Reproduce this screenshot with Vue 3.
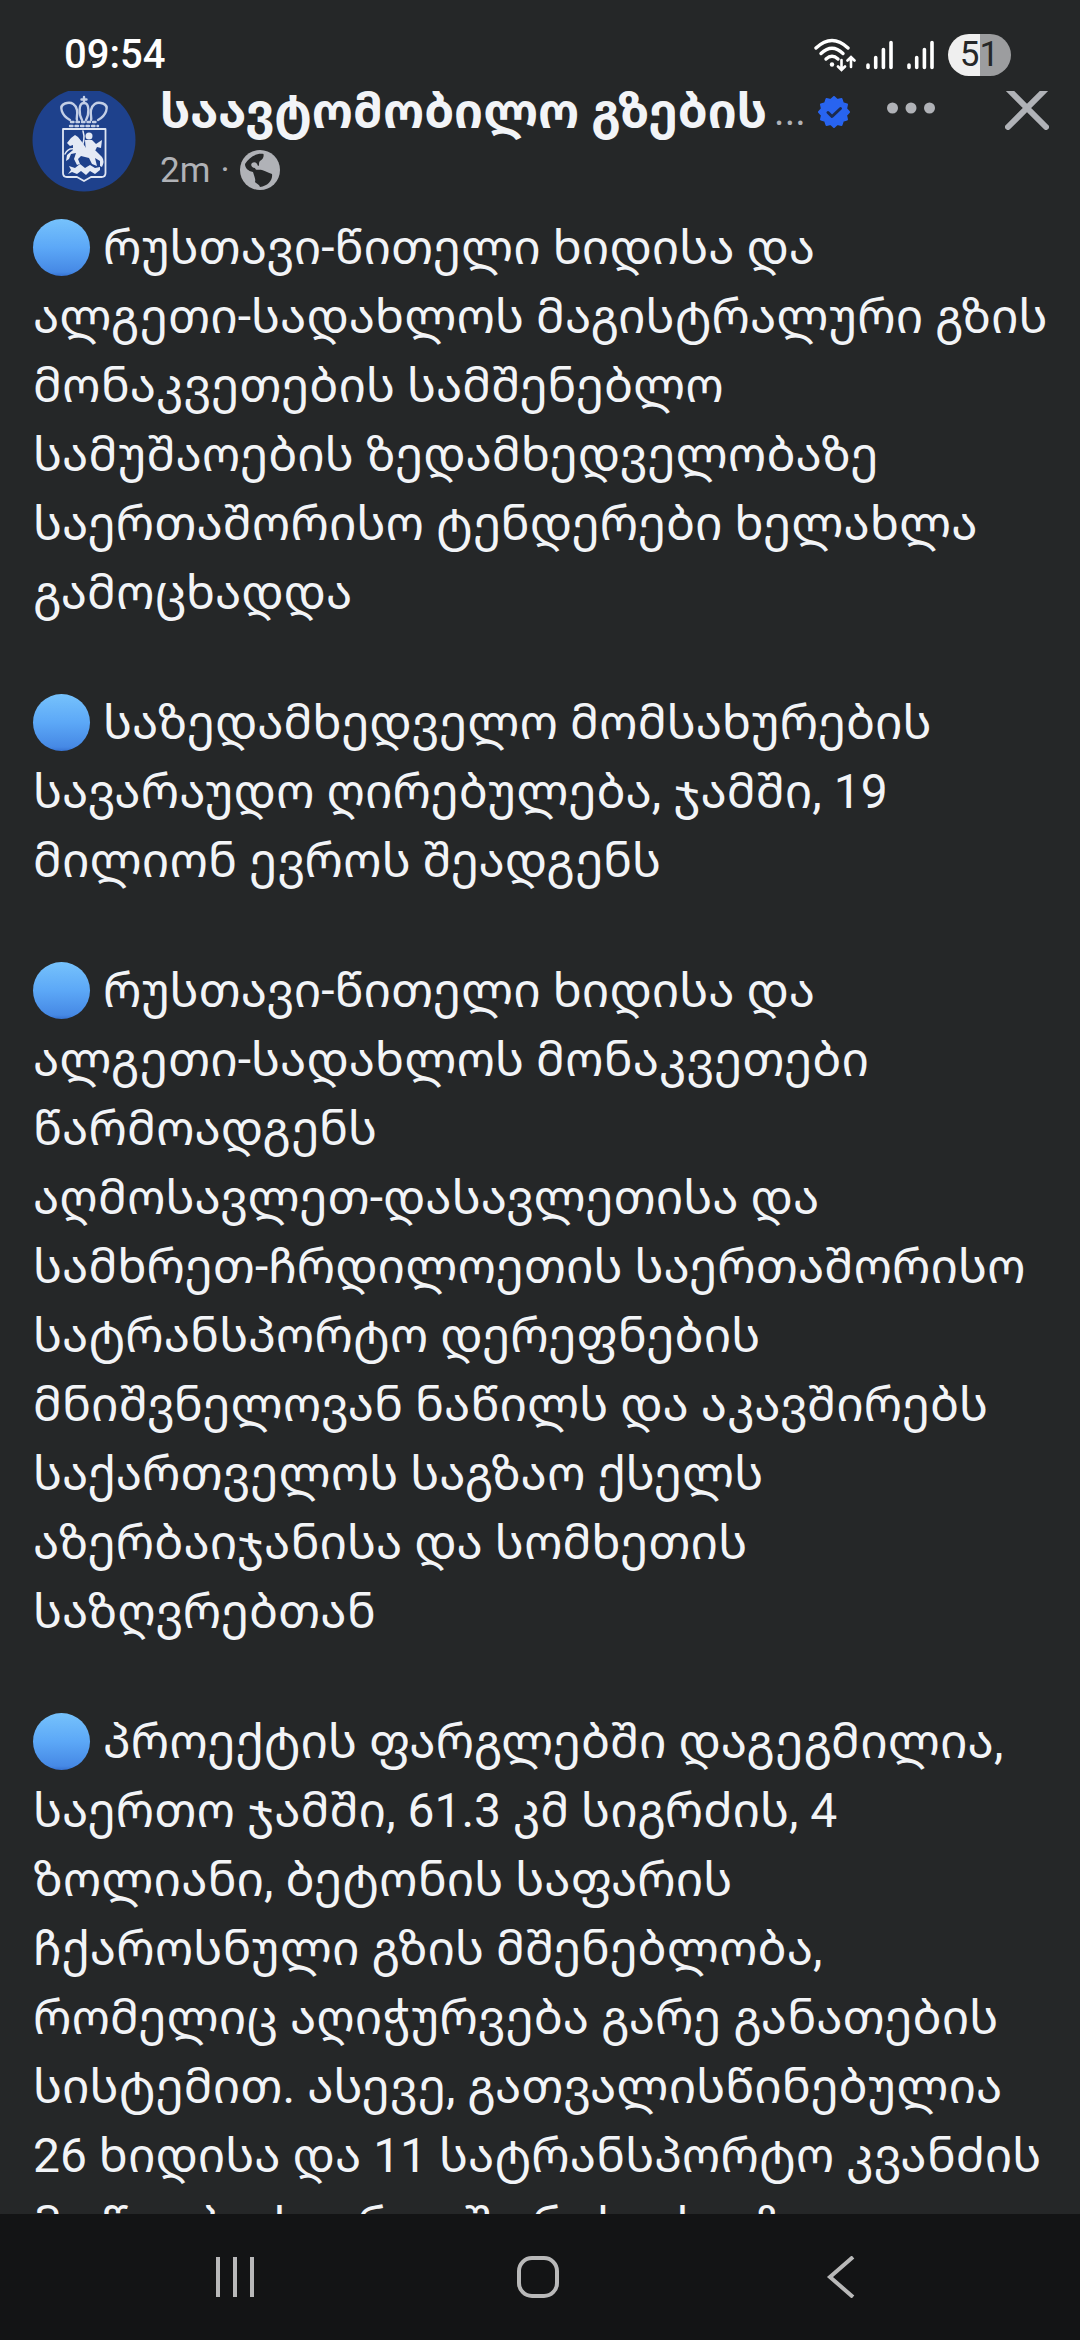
<template>
  <div class="screen">
    <div class="status-bar">
      <span class="clock">09:54</span>
      <div class="status-icons">
        <svg class="wifi" viewBox="0 0 42 34" fill="none" stroke="#fff" stroke-width="3.4" stroke-linecap="round">
          <path d="M2 10Q18 -5 34 10" />
          <path d="M7 15.500Q18 5 29 15.500" />
          <path d="M12 21Q18 15.500 24 21" />
          <circle cx="18" cy="26.500" r="2.200" fill="#fff" stroke="none" />
          <path d="M27.500 22V31M24 28.500L27.500 32L31 28.500M37 29V20M33.500 22.500L37 19L40.500 22.500" stroke-width="2.600" />
        </svg>
        <svg v-for="n in 2" :key="n" class="signal" viewBox="0 0 27 30" fill="none" stroke="#fff" stroke-width="3.600" stroke-linecap="round">
          <path d="M2 25V27.500M9.700 17.500V27.500M17.400 9.500V27.500M25 2.500V27.500" />
        </svg>
        <span class="battery">51</span>
      </div>
    </div>

    <main class="viewport">
      <header class="post-header">
        <svg class="avatar" viewBox="0 0 104 104">
          <circle cx="52" cy="52" r="51.500" fill="#1e418c" />
          <g fill="none" stroke="#c3cfe6" stroke-width="2.400" stroke-linecap="round" stroke-linejoin="round">
            <path d="M52 9V15M49.500 11.500H54.500" />
            <path d="M38 32C30 28 26 18 33 15.500C40 13 44 17 45 22C46 27 44 30 45 32" />
            <path d="M66 32C74 28 78 18 71 15.500C64 13 60 17 59 22C58 27 60 30 59 32" />
            <path d="M52 15C46 15 47 27 50 32M52 15C58 15 57 27 54 32" />
            <path d="M39 34H65M38 38H66" stroke-dasharray="2.500 3" />
          </g>
          <path d="M31 41H73.500V85Q73.500 89 69.500 89H59L52 93L45 89H35Q31 89 31 85Z" fill="none" stroke="#dfe6f3" stroke-width="1.800" stroke-linejoin="round" />
          <g fill="#e4eaf5">
            <path d="M43 47L46 49L50 54L54 60Q62 60 66 65L70 69Q73 73 70 79L68 78L68 73L63 70L65 78L60 76L57 70L49 68L46 71L48 76L45 77L42 71L44 65L39 66L37 71L34 73L35 67L41 62L41 57L38 58L35 55L39 50Z" />
            <circle cx="57" cy="48" r="3.500" />
            <path d="M53 52L60 52L64 56L70 52L69 60L65 59L61 67L54 64Z" />
            <path d="M37 78L43 80L48 76L53 80L58 77L63 80L68 79L68 82L63 86L58 83L54 87L49 83L45 86L40 84L36 86L39 82Z" />
          </g>
          <path d="M51 43Q54 52 48 63M33 66Q36 60 42 61" fill="none" stroke="#e4eaf5" stroke-width="1.500" stroke-linecap="round" />
        </svg>

        <div class="author">
          <div class="author-row">
            <h1 class="name">საავტომობილო გზების</h1>
            <span class="more">...</span>
            <svg class="verified" viewBox="0 0 32 32">
              <polygon :points="badgePoints" fill="#2864f0" stroke="#2864f0" stroke-width="2" stroke-linejoin="round" />
              <path d="M10 16.500L14 20.500L22.500 12.500" fill="none" stroke="#1d2b4d" stroke-width="3" stroke-linecap="round" stroke-linejoin="round" />
            </svg>
          </div>
          <div class="meta">
            <span>2m</span>
            <span>·</span>
            <svg class="globe" viewBox="0 0 40 40">
              <circle cx="20" cy="20" r="20" fill="#b0b2b7" />
              <path d="M23.500 4C15 3 9 8 5 14C5 18 8 21 13 22C14 26 16 29 15 32C17 34 19 34 20 37C28 36 33 30 32 24C28 23 26 21 22 20C18 19 16 21 15 18C12 18 10 15 12 13C15 11 17 13 18 16C20 16 18 13 20 11C23 9 24 7 23.500 4Z" fill="#252728" />
            </svg>
          </div>
        </div>

        <div class="actions">
          <button class="icon-button" type="button" aria-label="More options">
            <svg class="dots" viewBox="0 0 48 12" fill="#b0b2b7">
              <circle cx="5.500" cy="6" r="5.500" />
              <circle cx="24" cy="6" r="5.500" />
              <circle cx="42.500" cy="6" r="5.500" />
            </svg>
          </button>
          <button class="icon-button" type="button" aria-label="Close">
            <svg class="close" viewBox="0 0 44 44" fill="none" stroke="#b0b2b7" stroke-width="6" stroke-linecap="round">
              <path d="M3 3L41 41M41 3L3 41" />
            </svg>
          </button>
        </div>
      </header>

      <article class="post">
        <p v-for="(text, i) in paragraphs" :key="i"><i class="bullet"></i>{{ text }}</p>
      </article>
    </main>

    <nav class="nav-bar">
      <button class="icon-button" type="button" aria-label="Recent apps">
        <svg viewBox="0 0 42 42"><path d="M4 1V41M21 1V41M38 1V41" /></svg>
      </button>
      <button class="icon-button" type="button" aria-label="Home">
        <svg viewBox="0 0 42 42"><rect x="2" y="2" width="38" height="38" rx="13" /></svg>
      </button>
      <button class="icon-button" type="button" aria-label="Back">
        <svg viewBox="0 0 42 42"><path d="M33 1L10 21L33 41" /></svg>
      </button>
    </nav>
  </div>
</template>

<script setup>
const paragraphs = [
  `რუსთავი-წითელი ხიდისა და
ალგეთი-სადახლოს მაგისტრალური გზის
მონაკვეთების სამშენებლო
სამუშაოების ზედამხედველობაზე
საერთაშორისო ტენდერები ხელახლა
გამოცხადდა`,
  `საზედამხედველო მომსახურების
სავარაუდო ღირებულება, ჯამში, 19
მილიონ ევროს შეადგენს`,
  `რუსთავი-წითელი ხიდისა და
ალგეთი-სადახლოს მონაკვეთები
წარმოადგენს
აღმოსავლეთ-დასავლეთისა და
სამხრეთ-ჩრდილოეთის საერთაშორისო
სატრანსპორტო დერეფნების
მნიშვნელოვან ნაწილს და აკავშირებს
საქართველოს საგზაო ქსელს
აზერბაიჯანისა და სომხეთის
საზღვრებთან`,
  `პროექტის ფარგლებში დაგეგმილია,
საერთო ჯამში, 61.3 კმ სიგრძის, 4
ზოლიანი, ბეტონის საფარის
ჩქაროსნული გზის მშენებლობა,
რომელიც აღიჭურვება გარე განათების
სისტემით. ასევე, გათვალისწინებულია
26 ხიდისა და 11 სატრანსპორტო კვანძის
მოწყობა, საერთაშორისო საგზაო`,
];

// Scalloped edge of the verified badge
const badgePoints = Array.from({ length: 24 }, (_, i) => {
  const r = i % 2 ? 12.5 : 15;
  const a = (i * Math.PI) / 12;
  return `${(16 + r * Math.cos(a)).toFixed(2)},${(16 + r * Math.sin(a)).toFixed(2)}`;
}).join(" ");
</script>

<style>
body {
  margin: 0;
  background: #252728;
}
</style>

<style scoped>
.screen {
  display: flex;
  flex-direction: column;
  height: 100vh;
  background: #252728;
  color: #f2f4f7;
  font-family: Roboto, "Noto Sans Georgian", "DejaVu Sans", sans-serif;
}

.status-bar {
  display: flex;
  flex: none;
  align-items: center;
  justify-content: space-between;
  box-sizing: border-box;
  height: 91px;
  padding: 18px 69px 0 64px;
  color: #fff;
}

.clock {
  font-size: 40px;
  font-weight: 500;
}

.status-icons {
  display: flex;
  align-items: center;
  gap: 14px;
}

.wifi {
  width: 42px;
  height: 34px;
  margin-right: -4px;
}

.signal {
  width: 27px;
  height: 30px;
}

.battery {
  width: 63px;
  border-radius: 21px;
  background: linear-gradient(to right, #efefef 51%, #9c9d9f 51%);
  color: #252728;
  font-size: 35px;
  line-height: 42px;
  text-align: center;
}

.viewport {
  flex: 1;
  min-height: 0;
  overflow: hidden;
}

.post-header {
  display: flex;
  gap: 24px;
  margin-top: -3px;
  padding: 0 31px 0 32px;
}

.avatar {
  flex: none;
  width: 104px;
  height: 104px;
}

.author {
  flex: 1;
  min-width: 0;
}

.author-row {
  display: flex;
  align-items: center;
  height: 48px;
  white-space: nowrap;
}

.name {
  margin: 0;
  font-size: 48px;
  font-weight: 700;
  line-height: 48px;
}

.more {
  margin: 0 12px 0 7px;
  color: #b0b2b7;
  font-size: 40px;
  line-height: 48px;
}

.verified {
  flex: none;
  width: 32px;
  height: 32px;
}

.meta {
  display: flex;
  align-items: center;
  gap: 10px;
  height: 52px;
  padding-top: 8px;
  color: #b0b2b7;
  font-size: 35px;
}

.globe {
  width: 40px;
  height: 40px;
}

.actions {
  display: flex;
  flex: none;
  gap: 70px;
  align-items: center;
  height: 40px;
}

.icon-button {
  display: flex;
  align-items: center;
  justify-content: center;
  padding: 0;
  border: 0;
  background: none;
}

.dots {
  width: 48px;
  height: 12px;
}

.close {
  width: 44px;
  height: 44px;
}

.post {
  padding: 17px 32px 0 33px;
  font-size: 48px;
  line-height: 69px;
}

.post p {
  margin: 0 0 61px;
  white-space: pre-line;
}

.bullet {
  display: inline-block;
  width: 57px;
  height: 57px;
  margin-right: 13px;
  border-radius: 50%;
  background: linear-gradient(#76c2fc, #5ca8f7 50%, #4689e5 93%, #3672d2);
  vertical-align: -12px;
}

.nav-bar {
  display: grid;
  flex: none;
  grid-template-columns: repeat(3, 1fr);
  height: 126px;
  padding: 0 88px 0 84px;
  background: #131415;
}

.nav-bar svg {
  width: 42px;
  height: 42px;
  fill: none;
  stroke: #b9b9b9;
  stroke-width: 4;
}
</style>
